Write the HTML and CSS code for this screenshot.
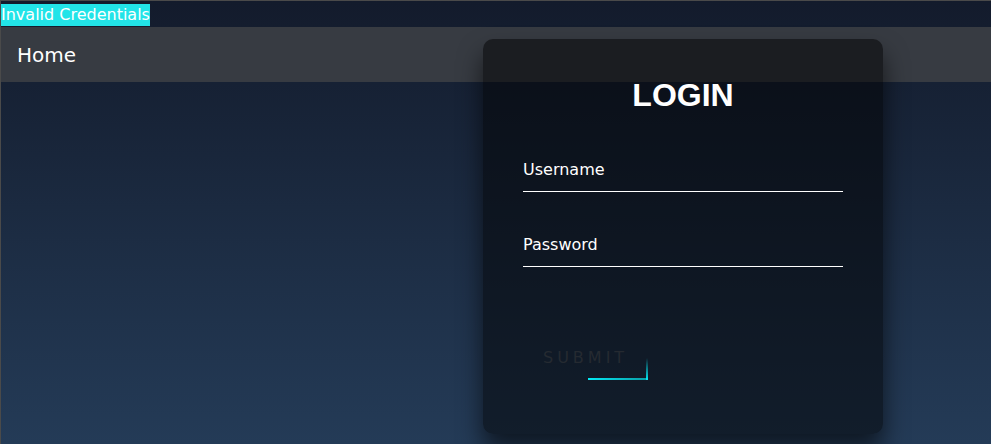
FILE: index.html
```html
<!DOCTYPE html>
<html>
    <head>
        <title>Login</title>
        <link rel="stylesheet" href="styles.css">
    </head>
    <body>
      <div class="alert">Invalid Credentials</div>
      <nav class="navbar">
        <a href="#" class="nav-link">Home</a>
      </nav>
      <div class="login-box">
        <h2>LOGIN</h2>
        <form>
          <div class="user-box">
            <input type="text" name="username" required>
            <label>Username</label>
          </div>
          <div class="user-box">
            <input type="password" name="password" required>
            <label>Password</label>
          </div>
          <button type="submit" class="submit-btn">
            <span class="line-bottom"></span>
            <span class="line-right"></span>
            Submit
          </button>
        </form>
      </div>
    </body>
</html>
```

FILE: styles.css
```css
html {
  height: 100%;
  border-top: 1px solid #4a4a4a;
  border-left: 1px solid #4a4a4a;
  box-sizing: border-box;
}
body {
  margin: 0px;
  min-height: 100%;
  font-family: "DejaVu Sans", sans-serif;
  background: linear-gradient(#131b2c, #243b57);
  overflow: hidden;
}
.alert {
  display: inline-block;
  margin-top: 3px;
  padding: 1px 0px 2px;
  background-color: #22e4e8;
  color: #ffffff;
  font-size: 16px;
}
.navbar {
  margin-top: 1px;
  height: 55px;
  padding: 0px 16px;
  display: flex;
  align-items: center;
  background-color: #373b42;
}
.nav-link {
  color: #ffffff;
  font-size: 20px;
  text-decoration: none;
}
.login-box {
  position: absolute;
  top: 39px;
  left: 483px;
  width: 400px;
  padding: 40px 40px 54px;
  box-sizing: border-box;
  background: rgba(0, 0, 0, 0.5);
  box-shadow: 0 15px 25px rgba(0, 0, 0, 0.6);
  border-radius: 10px;
}
.login-box h2 {
  margin: 0px 0px 41px;
  padding: 0px;
  color: #ffffff;
  text-align: center;
  font-family: "Liberation Sans", sans-serif;
  font-size: 32px;
  line-height: 32px;
}
.user-box {
  position: relative;
}
.user-box input {
  display: block;
  width: 100%;
  padding: 10px 0px;
  margin-bottom: 35px;
  font-family: "DejaVu Sans", sans-serif;
  font-size: 16px;
  color: #ffffff;
  border: none;
  border-bottom: 1px solid #ffffff;
  outline: none;
  background: transparent;
}
.user-box label {
  position: absolute;
  top: 0px;
  left: 0px;
  padding: 8px 0px;
  font-size: 16px;
  color: #ffffff;
  pointer-events: none;
}
.submit-btn {
  position: relative;
  display: inline-block;
  margin-top: 39px;
  padding: 7px 20px 13px;
  overflow: hidden;
  border: none;
  background: transparent;
  font-family: "DejaVu Sans", sans-serif;
  font-size: 16px;
  text-transform: uppercase;
  letter-spacing: 4px;
  color: #252a31;
}
.submit-btn span {
  position: absolute;
  display: block;
}
.line-bottom {
  bottom: 0px;
  right: 0px;
  width: 60px;
  height: 2px;
  background: linear-gradient(270deg, #0b9ea6, #03e9f4);
}
.line-right {
  bottom: 0px;
  right: 0px;
  width: 2px;
  height: 22px;
  background: linear-gradient(180deg, transparent, #03e9f4);
}
```
